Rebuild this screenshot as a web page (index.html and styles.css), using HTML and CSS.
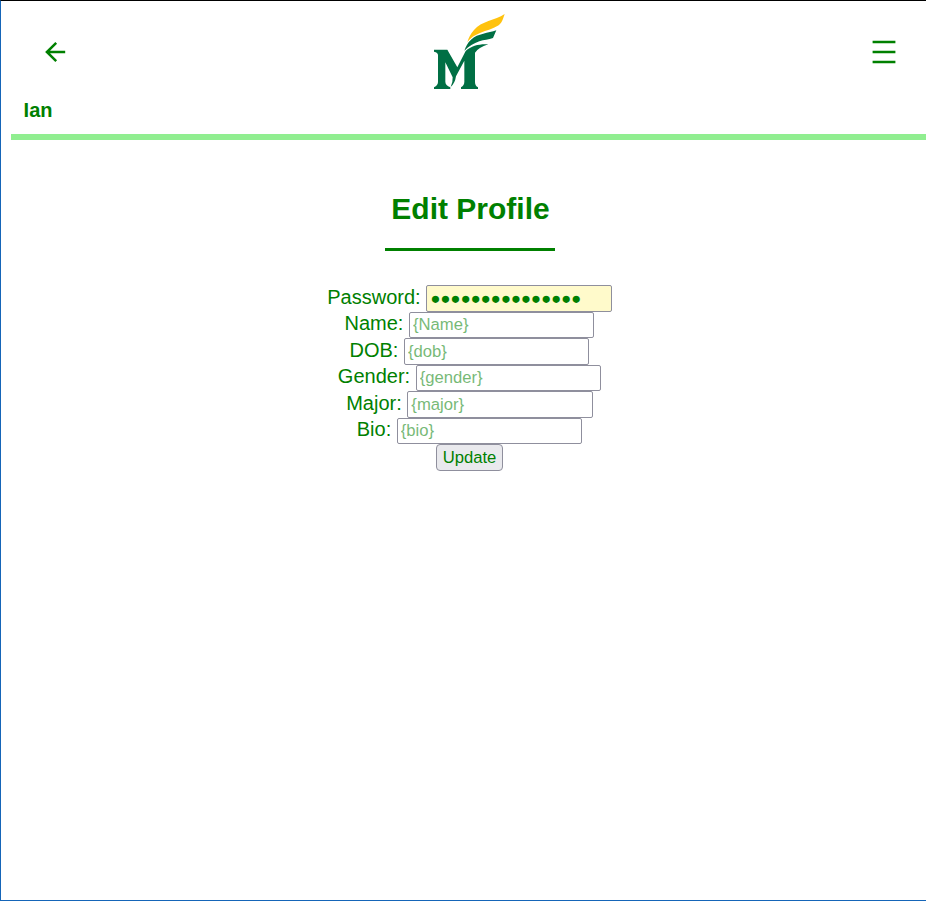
FILE: index.html
```html
<!DOCTYPE html>
<html lang="en">
<head>
<meta charset="utf-8">
<title>Edit Profile</title>
<link rel="stylesheet" href="styles.css">
</head>
<body>
<header class="header">
  <nav class="bar">
    <a class="back" href="#" aria-label="Back">
      <svg width="24" height="24" viewBox="0 0 24 24" fill="none" stroke="currentColor" stroke-width="2.5"><path d="M22.2 12H4M13.2 2.8 3.9 12l9.3 9.2"/></svg>
    </a>
    <svg class="logo" viewBox="0 0 300 285" aria-label="Logo">
      <path fill="#ffc20e" d="M254 27C225 46 184 48 162 75C151 88 146 98 142 111C153 98 164 90 180 84C200 76 220 72 236 61C248 51 250 38 254 27Z"/>
      <path fill="#006f44" d="M229 76C205 85 174 85 153 104C143 113 138 123 133 137C147 123 161 115 178 109C192 104 206 104 219 99Z"/>
      <path fill="#006f44" d="M205 118C181 116 155 121 137 138L112 187L82 134H42V140Q54 142 54 151V231Q54 241 42 247V252H91V247Q76 241 76 230V172L98 217Q99 230 92 246Q105 235 108 214L133 167V230Q133 241 123 247V252H174V247Q165 243 165 231V143Q175 128 205 118Z"/>
    </svg>
    <a class="menu" href="#" aria-label="Menu">
      <svg width="24" height="24" viewBox="0 0 24 24" stroke="currentColor" stroke-width="2.5"><path d="M.6 2h22.8M.6 12h22.8M.6 22h22.8"/></svg>
    </a>
  </nav>
  <div class="user">Ian</div>
</header>
<main class="main">
  <h1 class="title">Edit Profile</h1>
  <form class="form">
    <label class="row"><span class="label">Password: </span><input class="field filled" type="text" value="●●●●●●●●●●●●●●●"></label>
    <label class="row"><span class="label">Name: </span><input class="field" type="text" placeholder="{Name}"></label>
    <label class="row"><span class="label">DOB: </span><input class="field" type="text" placeholder="{dob}"></label>
    <label class="row"><span class="label">Gender: </span><input class="field" type="text" placeholder="{gender}"></label>
    <label class="row"><span class="label">Major: </span><input class="field" type="text" placeholder="{major}"></label>
    <label class="row"><span class="label">Bio: </span><input class="field" type="text" placeholder="{bio}"></label>
    <button class="update" type="button">Update</button>
  </form>
</main>
</body>
</html>
```
FILE: styles.css
```css
* { box-sizing: border-box; }
body {
  margin: 0;
  height: 901px;
  overflow: hidden;
  border-top: 1px solid #000;
  border-left: 1px solid #1565b8;
  border-bottom: 1px solid #1565b8;
  background: #fff;
  color: green;
  font: 20px/23px "Liberation Sans", Arial, sans-serif;
}
.header {
  height: 139px;
  margin-left: 10px;
  border-bottom: 6px solid lightgreen;
}
.bar {
  display: grid;
  grid-template-columns: 1fr 100px 1fr;
  height: 98px;
}
.back, .menu { color: green; height: 24px; margin-top: 39px; }
.back { margin-left: 32px; }
.menu { justify-self: end; margin-right: 30px; }
.back svg, .menu svg, .logo { display: block; }
.logo { width: 100px; height: 95px; margin: 4px 0 0 1px; }
.user { padding-left: 12.6px; font-weight: bold; }
.main {
  display: flex;
  flex-direction: column;
  align-items: center;
  padding: 52px 0 0 13px;
}
.title {
  width: 170px;
  height: 59px;
  margin: 0 0 34px;
  padding-left: 1px;
  border-bottom: 3px solid green;
  font-size: 30px;
  line-height: 34px;
  text-align: center;
  white-space: nowrap;
}
.form {
  display: flex;
  flex-direction: column;
  align-items: center;
  margin-right: 1px;
}
.row { display: flex; height: 26.5px; white-space: pre; }
.label { padding-top: 0.5px; }
.field {
  width: 185.5px;
  height: 26.5px;
  padding: 1.5px 3px 0.5px;
  border: 1px solid #8f8f9d;
  border-radius: 2px;
  background: #fff;
  color: green;
  font: 16.67px "Liberation Sans", Arial, sans-serif;
}
.filled { background: #fffacb; }
.field::placeholder { color: green; opacity: 0.54; }
.update {
  width: 67px;
  height: 26.5px;
  padding: 1px 0 0;
  border: 1px solid #8f8f9d;
  border-radius: 4px;
  background: #e9e9ed;
  color: green;
  font: 16.67px "Liberation Sans", Arial, sans-serif;
}
```
